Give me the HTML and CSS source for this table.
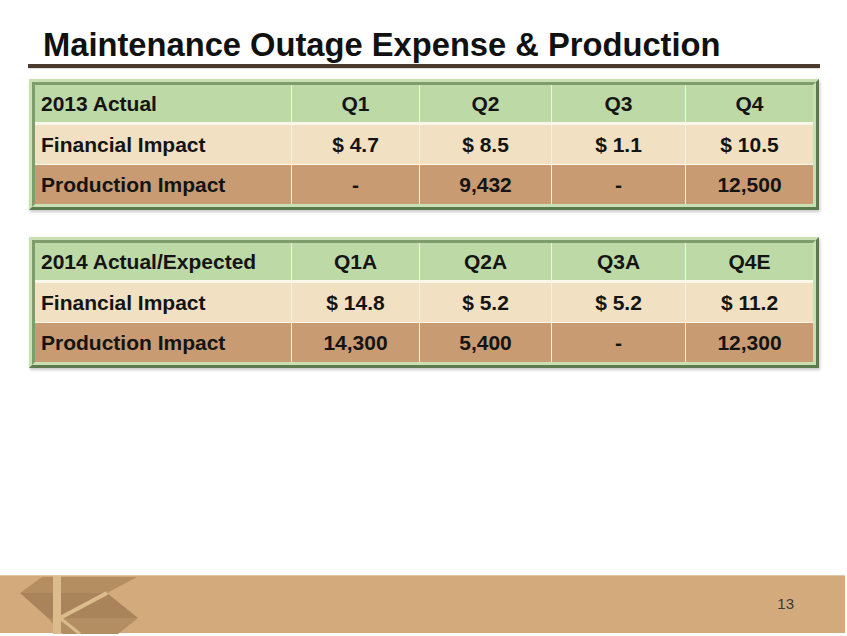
FILE: index.html
```html
<!DOCTYPE html>
<html>
<head>
<meta charset="utf-8">
<title>Maintenance Outage Expense &amp; Production</title>
<link rel="stylesheet" href="styles.css">
</head>
<body>
<div class="slide">
  <h1 class="title">Maintenance Outage Expense &amp; Production</h1>
  <div class="rule"></div>

  <div class="frame first">
    <div class="frame-inner">
      <div class="row head">
        <div class="cell label">2013 Actual</div>
        <div class="cell">Q1</div>
        <div class="cell">Q2</div>
        <div class="cell">Q3</div>
        <div class="cell">Q4</div>
      </div>
      <div class="row fin">
        <div class="cell label">Financial Impact</div>
        <div class="cell">$ 4.7</div>
        <div class="cell">$ 8.5</div>
        <div class="cell">$ 1.1</div>
        <div class="cell">$ 10.5</div>
      </div>
      <div class="row prod">
        <div class="cell label">Production Impact</div>
        <div class="cell">-</div>
        <div class="cell">9,432</div>
        <div class="cell">-</div>
        <div class="cell">12,500</div>
      </div>
    </div>
  </div>

  <div class="frame second">
    <div class="frame-inner">
      <div class="row head">
        <div class="cell label">2014 Actual/Expected</div>
        <div class="cell">Q1A</div>
        <div class="cell">Q2A</div>
        <div class="cell">Q3A</div>
        <div class="cell">Q4E</div>
      </div>
      <div class="row fin">
        <div class="cell label">Financial Impact</div>
        <div class="cell">$ 14.8</div>
        <div class="cell">$ 5.2</div>
        <div class="cell">$ 5.2</div>
        <div class="cell">$ 11.2</div>
      </div>
      <div class="row prod">
        <div class="cell label">Production Impact</div>
        <div class="cell">14,300</div>
        <div class="cell">5,400</div>
        <div class="cell">-</div>
        <div class="cell">12,300</div>
      </div>
    </div>
  </div>

  <div class="footer">
    <svg class="logo" width="150" height="58" viewBox="0 0 150 58">
      <polygon points="20,17 42,1 137,1 107,17" fill="#b48d60"/>
      <polygon points="20,17 107,17 138,42 48,42" fill="#a9845a"/>
      <polygon points="48,42 138,42 118,58 62,58" fill="#b38e62"/>
      <rect x="53" y="0" width="8" height="58" fill="#dcbb8c"/>
      <line x1="60" y1="42" x2="107" y2="17" stroke="#dcbb8c" stroke-width="4"/>
      <line x1="60" y1="42" x2="80" y2="58" stroke="#dcbb8c" stroke-width="3"/>
    </svg>
    <span class="page-num">13</span>
  </div>
</div>
</body>
</html>
```

FILE: styles.css
```css
html, body {
  margin: 0;
  padding: 0;
  background: #ffffff;
}

.slide {
  width: 847px;
  height: 636px;
  overflow: hidden;
  font-family: "Liberation Sans", Arial, sans-serif;
  color: #141414;
}

.title {
  margin: 0;
  padding: 26px 0 0 43px;
  font-size: 32.7px;
  line-height: 38px;
  font-weight: bold;
  color: #111111;
}

.rule {
  margin-left: 28px;
  width: 792px;
  height: 4px;
  background: #4b3b2c;
  box-shadow: 0 1px 1px rgba(0, 0, 0, 0.15);
}

.frame {
  margin-left: 29px;
  width: 790px;
  box-sizing: border-box;
  border: 3px solid;
  border-color: #c8e0b3 #5d7a4f #5d7a4f #c8e0b3;
  box-shadow: 1px 2px 3px rgba(0, 0, 0, 0.22);
}

.frame.first {
  margin-top: 11px;
}

.frame.second {
  margin-top: 27px;
}

.frame-inner {
  border: 3px solid;
  border-color: #7f9c6c #c8e0b3 #c8e0b3 #7f9c6c;
  background: #fbf6ea;
  display: flex;
  flex-direction: column;
}

.row {
  display: grid;
  grid-template-columns: 256px 127px 131px 133px 1fr;
  column-gap: 1px;
  background: #f7f1e4;
}

.row.head {
  height: 37px;
  margin-bottom: 3px;
}

.row.fin {
  height: 39px;
  margin-bottom: 1px;
}

.row.prod {
  height: 39px;
}

.cell {
  display: flex;
  align-items: center;
  justify-content: center;
  font-size: 21px;
  font-weight: bold;
  white-space: nowrap;
}

.cell.label {
  justify-content: flex-start;
  padding-left: 6px;
}

.head .cell {
  background: #bdd9a6;
}

.fin .cell {
  background: #f1e0c1;
}

.prod .cell {
  background: #c89b72;
}

.footer {
  margin-top: 207px;
  width: 845px;
  height: 58px;
  background: #d3aa7c;
  border-top: 1px solid #e2c7a4;
  box-sizing: border-box;
  display: flex;
  align-items: center;
  justify-content: space-between;
  padding-right: 51px;
}

.logo {
  display: block;
  align-self: flex-start;
}

.page-num {
  font-size: 15px;
  color: #3a3a3a;
  padding-bottom: 3px;
}
```
